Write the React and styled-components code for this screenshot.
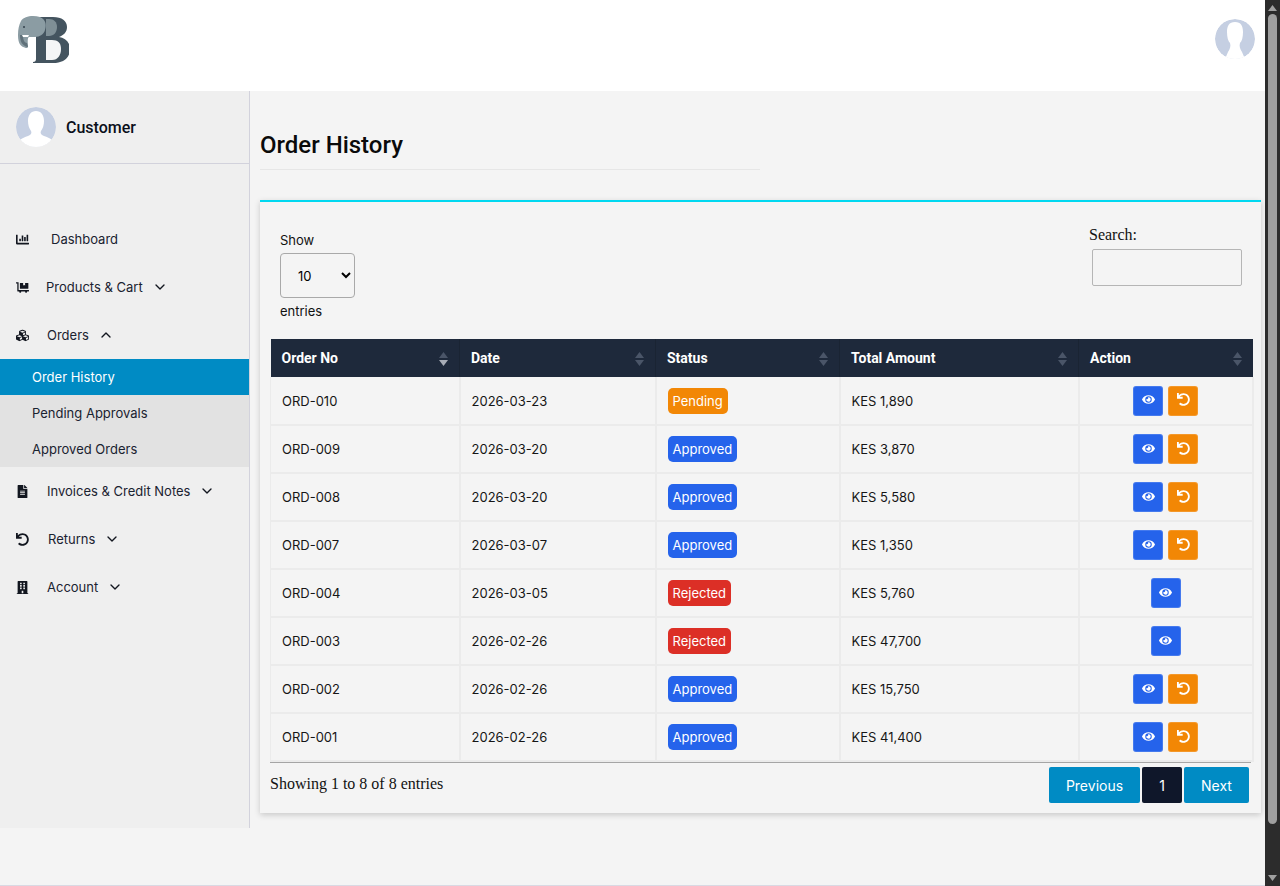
import React from 'react';
import styled, { createGlobalStyle } from 'styled-components';
import { FaChartBar, FaEye, FaFileAlt, FaBuilding, FaUndo, FaDollyFlatbed, FaCubes } from 'react-icons/fa';
import { MdOutlineKeyboardArrowDown, MdOutlineKeyboardArrowUp } from 'react-icons/md';
import { FiChevronDown, FiChevronUp } from 'react-icons/fi';

const GlobalStyle = createGlobalStyle`
  * { box-sizing: border-box; }
  html, body { margin: 0; padding: 0; height: 100%; overflow: hidden; }
  body { background: #f4f4f4; font-family: Inter, "Liberation Sans", sans-serif; color: #111; }
`;

const orders = [
  { no: 'ORD-010', date: '2026-03-23', status: 'Pending', total: 'KES 1,890', ret: true },
  { no: 'ORD-009', date: '2026-03-20', status: 'Approved', total: 'KES 3,870', ret: true },
  { no: 'ORD-008', date: '2026-03-20', status: 'Approved', total: 'KES 5,580', ret: true },
  { no: 'ORD-007', date: '2026-03-07', status: 'Approved', total: 'KES 1,350', ret: true },
  { no: 'ORD-004', date: '2026-03-05', status: 'Rejected', total: 'KES 5,760', ret: false },
  { no: 'ORD-003', date: '2026-02-26', status: 'Rejected', total: 'KES 47,700', ret: false },
  { no: 'ORD-002', date: '2026-02-26', status: 'Approved', total: 'KES 15,750', ret: true },
  { no: 'ORD-001', date: '2026-02-26', status: 'Approved', total: 'KES 41,400', ret: true },
];

const statusColors = { Pending: '#f28705', Approved: '#2563eb', Rejected: '#dc2f26' };

const columns = [
  { label: 'Order No', width: 189, active: true },
  { label: 'Date', width: 196 },
  { label: 'Status', width: 184 },
  { label: 'Total Amount', width: 239 },
  { label: 'Action', width: 174 },
];

const Avatar = ({ size }) => (
  <AvatarSvg width={size} height={size} viewBox="0 0 40 40">
    <circle cx="20" cy="20" r="20" fill="#c5cfe2" />
    <path d="M20 4c5 0 8 4 8 10 0 4-1 7-3 10-1 2 0 4 3 5 3 1 6 2 8 4a20 20 0 0 1-32 0c2-2 5-3 8-4 3-1 4-3 3-5-2-3-3-6-3-10 0-6 3-10 8-10z" fill="#fff" />
  </AvatarSvg>
);

const TopAvatar = () => (
  <AvatarSvg width="40" height="40" viewBox="0 0 40 40">
    <circle cx="20" cy="20" r="20" fill="#c5cfe2" />
    <path d="M20 3c6 0 8 4 8 10 0 5-1 9-3 11-1 3 0 6 2 9 1 2 2 5 3 7H10c1-2 2-5 3-7 2-3 3-6 2-9-2-2-3-6-3-11 0-6 2-10 8-10z" fill="#fff" />
  </AvatarSvg>
);

const Logo = () => (
  <svg width="54" height="52" viewBox="0 0 54 52">
    <path d="M18 4h20c9 0 14 4 14 10 0 5-3 8-8 10 6 1 11 5 11 12 0 9-7 14-17 14H18v-1c2 0 3-1 3-3V8c0-2-1-3-3-3z" fill="#44545f" />
    <path d="M31 27h6c6 0 9 3 9 9s-3 11-9 11h-6z" fill="#fff" opacity="0.95" />
    <path d="M31 6h3c5 0 8 3 8 8s-3 9-8 9h-3z" fill="#7f8f96" />
    <path d="M6 8c3-5 12-6 19-4 5 2 7 7 5 13-1 4-5 7-10 7h-6c-2 1-1 7-1 9 0 3-2 2-5 1-4-2-5-7-5-12 0-6 1-10 3-14z" fill="#8b9ca3" />
    <path d="M5 22c0 6 2 11 8 12l-1-4c-3 0-4-4-4-8z" fill="#5f7079" />
    <path d="M7 22h7l-1 2H8z" fill="#fff" />
    <circle cx="9" cy="14" r="1" fill="#33424c" />
  </svg>
);

const NavRow = ({ icon, label, gap, arrow }) => (
  <NavItem>
    <NavIcon>{icon}</NavIcon>
    <NavLabel $gap={gap}>{label}</NavLabel>
    {arrow === 'down' && <Chevron><FiChevronDown /></Chevron>}
    {arrow === 'up' && <Chevron><FiChevronUp /></Chevron>}
  </NavItem>
);

const SortArrows = ({ active }) => (
  <Sort width="9" height="16" viewBox="0 0 9 16">
    <path d="M4.5 1 9 7H0z" fill="#4a5568" />
    <path d="M4.5 15 0 9h9z" fill={active ? '#a8adb7' : '#4a5568'} />
  </Sort>
);

export default function App() {
  return (
    <>
      <GlobalStyle />
      <Window>
        <Page>
          <TopBar>
            <Logo />
            <TopAvatar />
          </TopBar>
          <Body>
            <Sidebar>
              <Profile>
                <Avatar size={40} />
                <ProfileName>Customer</ProfileName>
              </Profile>
              <Nav>
                <NavRow icon={<FaChartBar />} label="Dashboard" gap={22} />
                <NavRow icon={<FaDollyFlatbed />} label="Products & Cart" gap={17} arrow="down" />
                <NavRow icon={<FaCubes />} label="Orders" gap={18} arrow="up" />
                <SubMenu>
                  <SubItem $active>Order History</SubItem>
                  <SubItem>Pending Approvals</SubItem>
                  <SubItem>Approved Orders</SubItem>
                </SubMenu>
                <NavRow icon={<FaFileAlt />} label="Invoices & Credit Notes" gap={18} arrow="down" />
                <NavRow icon={<FaUndo />} label="Returns" gap={19} arrow="down" />
                <NavRow icon={<FaBuilding />} label="Account" gap={18} arrow="down" />
              </Nav>
            </Sidebar>
            <Main>
              <Heading>Order History</Heading>
              <Card>
                <Controls>
                  <LengthControl>
                    <span>Show</span>
                    <LengthSelect defaultValue="10">
                      <option value="10">10</option>
                      <option value="25">25</option>
                    </LengthSelect>
                    <span>entries</span>
                  </LengthControl>
                  <SearchControl>
                    <span>Search:</span>
                    <SearchInput />
                  </SearchControl>
                </Controls>
                <Table>
                  <colgroup>
                    {columns.map(c => (
                      <col key={c.label} style={{ width: c.width }} />
                    ))}
                  </colgroup>
                  <thead>
                    <tr>
                      {columns.map(c => (
                        <Th key={c.label}>
                          {c.label}
                          <SortArrows active={c.active} />
                        </Th>
                      ))}
                    </tr>
                  </thead>
                  <tbody>
                    {orders.map(o => (
                      <tr key={o.no}>
                        <Td>{o.no}</Td>
                        <Td>{o.date}</Td>
                        <Td>
                          <Badge $color={statusColors[o.status]}>{o.status}</Badge>
                        </Td>
                        <Td>{o.total}</Td>
                        <ActionTd>
                          <Actions>
                            <ActionButton $color="#2563eb"><FaEye /></ActionButton>
                            {o.ret && <ActionButton $color="#f28705"><FaUndo /></ActionButton>}
                          </Actions>
                        </ActionTd>
                      </tr>
                    ))}
                  </tbody>
                </Table>
                <Footer>
                  <Info>Showing 1 to 8 of 8 entries</Info>
                  <Pager>
                    <PageButton $w={91}>Previous</PageButton>
                    <PageButton $w={40} $current>1</PageButton>
                    <PageButton $w={65}>Next</PageButton>
                  </Pager>
                </Footer>
              </Card>
            </Main>
          </Body>
        </Page>
        <Scrollbar>
          <ScrollArrow viewBox="0 0 9 6" width="9" height="6"><path d="M4.5 0 9 6H0z" fill="#a0a0a0" /></ScrollArrow>
          <ScrollThumb />
          <ScrollArrow viewBox="0 0 9 6" width="9" height="6"><path d="M4.5 6 0 0h9z" fill="#a0a0a0" /></ScrollArrow>
        </Scrollbar>
      </Window>
    </>
  );
}

const Window = styled.div`
  display: flex;
  width: 1280px;
  height: 886px;
  overflow: hidden;
`;
const Page = styled.div`
  width: 1265px;
  height: 886px;
  display: flex;
  flex-direction: column;
  background: #f4f4f4;
  border-bottom: 1px solid #d9d9e3;
  padding-bottom: 2px;
`;
const Scrollbar = styled.div`
  width: 15px;
  background: #2c2c2c;
  display: flex;
  flex-direction: column;
  align-items: center;
  justify-content: space-between;
  padding: 5px 0;
`;
const ScrollArrow = styled.svg`
  display: block;
  flex: none;
`;
const ScrollThumb = styled.div`
  width: 9px;
  height: 810px;
  margin-top: 3px;
  margin-bottom: auto;
  background: #9f9f9f;
  border-radius: 5px;
`;
const TopBar = styled.header`
  height: 91px;
  background: #fff;
  display: flex;
  justify-content: space-between;
  align-items: flex-start;
  padding: 13px 10px 0 15px;
  flex: none;
  svg:last-child { margin-top: 6px; }
`;
const AvatarSvg = styled.svg`
  display: block;
  flex: none;
  border-radius: 50%;
`;
const Body = styled.div`
  display: flex;
  flex: 1;
  min-height: 0;
`;
const Sidebar = styled.aside`
  width: 250px;
  height: 737px;
  flex: none;
  background: #efefef;
  border-right: 1px solid #d2d2dc;
`;
const Profile = styled.div`
  height: 73px;
  display: flex;
  align-items: center;
  gap: 10px;
  padding: 0 16px;
  border-bottom: 1px solid #d2d2dc;
`;
const ProfileName = styled.div`
  font-family: Roboto, sans-serif;
  font-weight: 500;
  font-size: 16px;
  color: #0a0f1a;
`;
const Nav = styled.nav`
  padding-top: 51px;
`;
const NavItem = styled.div`
  height: 48px;
  display: flex;
  align-items: center;
  padding-left: 16px;
  font-size: 13px;
  color: #1a2230;
`;
const NavIcon = styled.span`
  display: flex;
  font-size: 13px;
  color: #12161f;
`;
const NavLabel = styled.span`
  margin-left: ${p => p.$gap}px;
`;
const Chevron = styled.span`
  display: flex;
  margin-left: 9px;
  font-size: 16px;
  color: #12161f;
  stroke-width: 3;
`;
const SubMenu = styled.div`
  background: #e2e2e2;
`;
const SubItem = styled.div`
  height: 36px;
  display: flex;
  align-items: center;
  padding-left: 32px;
  font-size: 13px;
  color: ${p => (p.$active ? '#fff' : '#1a2230')};
  background: ${p => (p.$active ? '#008bc4' : 'transparent')};
`;
const Main = styled.main`
  flex: 1;
  min-width: 0;
  padding: 0 4px 0 10px;
`;
const Heading = styled.h1`
  margin: 0;
  width: 500px;
  height: 79px;
  padding-top: 39px;
  font-family: Roboto, sans-serif;
  font-size: 24px;
  font-weight: 500;
  line-height: 30px;
  color: #0a0a0a;
  border-bottom: 1px solid #e6e6e6;
`;
const Card = styled.section`
  margin-top: 30px;
  height: 613px;
  background: #f4f4f4;
  border-top: 2px solid #00d8f0;
  box-shadow: 0 2px 6px rgba(0, 0, 0, 0.18);
  padding: 0 10px;
`;
const Controls = styled.div`
  height: 137px;
  display: flex;
  justify-content: space-between;
  padding: 30px 9px 0 10px;
`;
const LengthControl = styled.label`
  display: flex;
  flex-direction: column;
  align-items: flex-start;
  font-size: 13px;
  line-height: 16px;
  color: #111;
`;
const LengthSelect = styled.select`
  width: 75px;
  height: 45px;
  margin: 5px 0;
  padding: 0 0 0 13px;
  font-family: Inter, sans-serif;
  font-size: 13px;
  background: transparent;
  border: 1px solid #a9a9a9;
  border-radius: 4px;
`;
const SearchControl = styled.label`
  display: flex;
  flex-direction: column;
  font-family: "Liberation Serif", serif;
  font-size: 16px;
  line-height: 18px;
  margin-top: -6px;
`;
const SearchInput = styled.input`
  width: 150px;
  height: 37px;
  margin: 5px 0 0 3px;
  background: transparent;
  border: 1px solid #b5b5b5;
  border-radius: 2px;
`;
const Table = styled.table`
  width: 982px;
  table-layout: fixed;
  border-collapse: collapse;
`;
const Th = styled.th`
  position: relative;
  height: 38px;
  padding: 0 11px;
  text-align: left;
  background: #1e293b;
  color: #fff;
  font-family: Roboto, sans-serif;
  font-size: 14px;
  font-weight: 700;
  border-right: 1px solid #1a2433;
  &:last-child { border-right: 0; }
`;
const Sort = styled.svg`
  position: absolute;
  right: 11px;
  top: 12px;
`;
const Td = styled.td`
  height: 48px;
  padding: 0 11px;
  font-size: 13px;
  color: #161616;
  border: 2px solid #ebebeb;
  border-top: 0;
  &:first-child { border-left: 1px solid #ebebeb; }
`;
const ActionTd = styled(Td)`
  padding: 0;
`;
const Actions = styled.div`
  display: flex;
  justify-content: center;
  gap: 5px;
`;
const Badge = styled.span`
  display: inline-block;
  padding: 0 5px;
  height: 26px;
  line-height: 26px;
  border-radius: 5px;
  background: ${p => p.$color};
  color: #fff;
  font-size: 13px;
`;
const ActionButton = styled.button`
  width: 30px;
  height: 30px;
  padding: 0;
  display: flex;
  align-items: center;
  justify-content: center;
  border: 1px solid rgba(255, 255, 255, 0.15);
  border-radius: 3px;
  background: ${p => p.$color};
  color: #fff;
  font-size: 13px;
  svg { margin-top: -2px; }
`;
const Footer = styled.div`
  display: flex;
  justify-content: space-between;
  align-items: flex-start;
  border-top: 1px solid #a5a5a5;
`;
const Info = styled.div`
  margin-top: 12px;
  font-family: "Liberation Serif", serif;
  font-size: 16px;
  line-height: 18px;
`;
const Pager = styled.div`
  display: flex;
  gap: 2px;
  padding: 4px 2px 0 0;
`;
const PageButton = styled.button`
  width: ${p => p.$w}px;
  height: 36px;
  border: 0;
  border-radius: 2px;
  font-family: Inter, sans-serif;
  font-size: 14px;
  color: #fff;
  background: ${p => (p.$current ? '#0f172a' : '#008bc4')};
`;
